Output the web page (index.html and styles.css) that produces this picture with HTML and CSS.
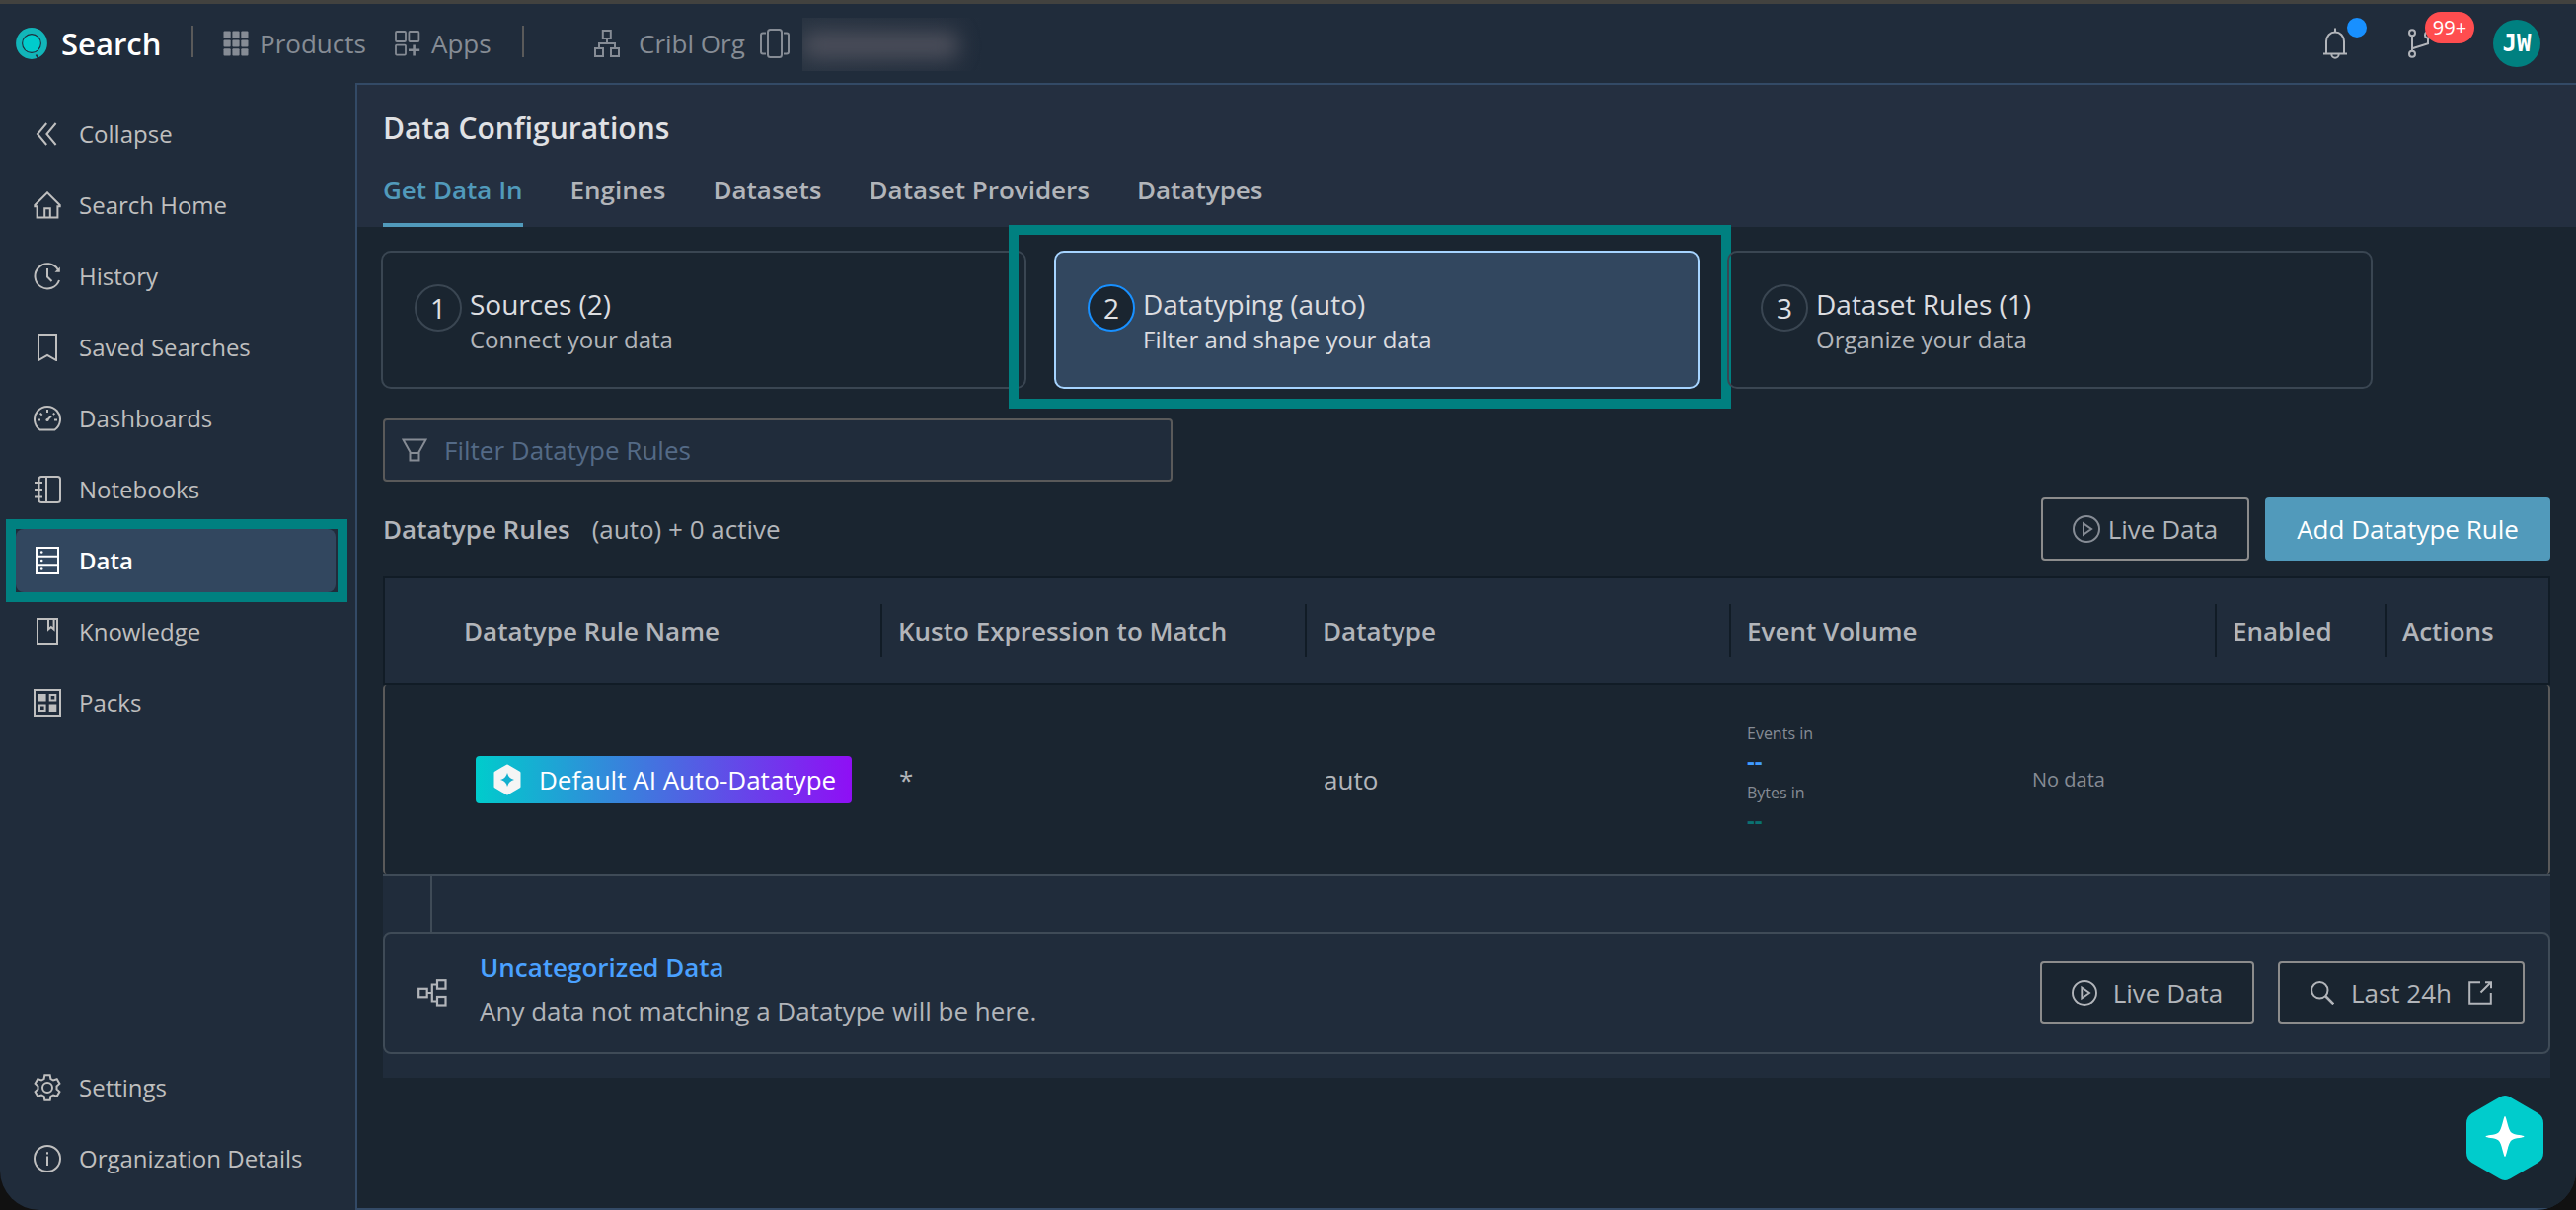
FILE: index.html
```html
<!DOCTYPE html>
<html lang="en">
<head>
    <meta charset="UTF-8">
    <meta name="viewport" content="width=device-width, initial-scale=1.0">
    <title>Data Configurations</title>
    <link rel="stylesheet" href="styles.css">
</head>
<body>
<div class="app">

    <header class="topbar">
        <div class="brand">
            <svg width="32" height="32" viewBox="0 0 32 32">
                <circle cx="16" cy="16" r="12.9" fill="none" stroke="#12b5b9" stroke-width="6"/>
                <circle cx="16" cy="16" r="8.8" fill="#00cccc"/>
                <path d="M20.5 27.5l2.6 4.5" stroke="#202c3b" stroke-width="1.6"/>
            </svg>
            <span>Search</span>
        </div>
        <div class="divider"></div>
        <div class="top-link products">
            <svg width="26" height="26" viewBox="0 0 26 26" fill="currentColor">
                <rect x="0.5" y="0.5" width="7.2" height="7.2" rx="1"/><rect x="9.4" y="0.5" width="7.2" height="7.2" rx="1"/><rect x="18.3" y="0.5" width="7.2" height="7.2" rx="1"/>
                <rect x="0.5" y="9.4" width="7.2" height="7.2" rx="1"/><rect x="9.4" y="9.4" width="7.2" height="7.2" rx="1"/><rect x="18.3" y="9.4" width="7.2" height="7.2" rx="1"/>
                <rect x="0.5" y="18.3" width="7.2" height="7.2" rx="1"/><rect x="9.4" y="18.3" width="7.2" height="7.2" rx="1"/><rect x="18.3" y="18.3" width="7.2" height="7.2" rx="1"/>
            </svg>
            <span>Products</span>
        </div>
        <div class="top-link apps">
            <svg width="26" height="26" viewBox="0 0 26 26" fill="none" stroke="currentColor" stroke-width="1.8">
                <rect x="1" y="1" width="10" height="10" rx="1"/><rect x="14.4" y="1" width="10" height="10" rx="1"/><rect x="1" y="14.6" width="10" height="10" rx="1"/>
                <path d="M19.6 14.4v11M14 19.8h11.2" stroke-width="2.6"/>
            </svg>
            <span>Apps</span>
        </div>
        <div class="divider"></div>
        <div class="top-link org">
            <svg width="26" height="28" viewBox="0 0 26 28" fill="none" stroke="currentColor" stroke-width="2">
                <rect x="8.8" y="1" width="8" height="8"/><rect x="1" y="19" width="8" height="8"/><rect x="17" y="19" width="8" height="8"/>
                <path d="M13 9v5M5 19v-5h16v5"/>
            </svg>
            <span>Cribl Org</span>
        </div>
        <svg class="top-cards" width="32" height="30" viewBox="0 0 32 30" fill="none" stroke="currentColor" stroke-width="2">
            <rect x="9" y="1" width="14" height="28" rx="2.5"/>
            <path d="M7 4.5H4Q2 4.5 2 6.5v17q0 2 2 2h3M25 4.5h3q2 0 2 2v17q0 2-2 2h-3"/>
        </svg>
        <div class="redacted"><div class="redacted-blob"></div></div>

        <div class="top-right">
            <div class="bell">
                <svg width="24" height="32" viewBox="0 0 24 32" fill="none" stroke="currentColor" stroke-width="2">
                    <path d="M3 26V14a9 9.5 0 0 1 18 0v12M0 26.5h24M12 0.5v4M8.3 27a3.7 3.7 0 0 0 7.4 0"/>
                </svg>
                <span class="dot"></span>
            </div>
            <div class="branch">
                <svg width="30" height="30" viewBox="0 0 30 30" fill="none" stroke="currentColor" stroke-width="2">
                    <circle cx="4" cy="4.2" r="3"/><circle cx="4" cy="25.8" r="3"/><circle cx="20" cy="6.5" r="3"/>
                    <path d="M4 7.2v15.6M4 20.2l16-5V9.5"/>
                </svg>
                <span class="count">99+</span>
            </div>
            <div class="avatar">JW</div>
        </div>
    </header>

    <div class="body">
        <nav class="sidebar">
            <a class="nav-item">
                <svg width="28" height="28" viewBox="0 0 28 28"><path d="M13.2 3L4 14l9.200 11M22.600 3l-9.200 11 9.200 11"/></svg>
                <span>Collapse</span>
            </a>
            <a class="nav-item">
                <svg width="28" height="28" viewBox="0 0 28 28"><path d="M4 15.200H1.300V14L14 1.300 26.700 14v1.200H24.400V26.500H3.600V15.200zM11.200 26V17.300h5.600V26"/></svg>
                <span>Search Home</span>
            </a>
            <a class="nav-item">
                <svg width="28" height="28" viewBox="0 0 28 28"><path d="M24.800 7.200A12.600 12.600 0 1 0 26 18M14 6v8.500l4.500 4.500"/><path class="solid" d="M26.800 4.500v5.300h-5.300z"/></svg>
                <span>History</span>
            </a>
            <a class="nav-item">
                <svg width="28" height="28" viewBox="0 0 28 28"><path d="M5 1h18v26l-9-5.200L5 27z"/></svg>
                <span>Saved Searches</span>
            </a>
            <a class="nav-item">
                <svg width="28" height="28" viewBox="0 0 28 28"><path d="M6.500 25.500A13 13 0 1 1 21.500 25.500zM14 5v3M4 15.500h3M21 15.500h3M6.700 8.600l2 2M21.300 8.600l-1.400 1.400M14 15.500l4-4"/><circle class="solid" cx="14" cy="15.500" r="1.600"/></svg>
                <span>Dashboards</span>
            </a>
            <a class="nav-item">
                <svg width="28" height="28" viewBox="0 0 28 28"><rect x="5.500" y="1" width="21.500" height="26" rx="2.500"/><path d="M13 1v26M1 7h8M1 14h8M1 21.500h8"/></svg>
                <span>Notebooks</span>
            </a>
            <a class="nav-item active">
                <svg width="28" height="28" viewBox="0 0 28 28"><path d="M3 1h22v26H3zM3 9.700h22M3 18.300h22"/><circle class="solid" cx="8.200" cy="5.500" r="1.300"/><circle class="solid" cx="8.200" cy="14" r="1.300"/><circle class="solid" cx="8.200" cy="22.500" r="1.300"/></svg>
                <span>Data</span>
            </a>
            <a class="nav-item">
                <svg width="28" height="28" viewBox="0 0 28 28"><path d="M4 1h20v26H4zM15 1v10.500l2.800-2.500 2.800 2.500V1"/></svg>
                <span>Knowledge</span>
            </a>
            <a class="nav-item">
                <svg width="28" height="28" viewBox="0 0 28 28"><path d="M1 1h26v26H1zM16.700 6h5.600v5.600h-5.600zM6 16.500h5.600v5.600H6z"/><path class="solid" d="M5 5h7.600v7.600H5zM15.700 15.500h7.600v7.600h-7.600z"/></svg>
                <span>Packs</span>
            </a>
            <a class="nav-item push">
                <svg width="28" height="28" viewBox="0 0 28 28"><circle cx="14" cy="14" r="5"/><path d="M11.300 1.200h5.400l.7 3.800 2.600 1.500 3.700-1.300 2.700 4.700-2.900 2.500v3.200l2.900 2.500-2.700 4.700-3.700-1.300-2.600 1.500-.7 3.800h-5.400l-.7-3.800L8 21.500l-3.700 1.300-2.700-4.700 2.900-2.500v-3.200L1.600 9.900l2.700-4.700L8 6.500 10.600 5z"/></svg>
                <span>Settings</span>
            </a>
            <a class="nav-item">
                <svg width="28" height="28" viewBox="0 0 28 28"><circle cx="14" cy="14" r="13"/><path d="M14 11.500V21M14 7.300v2.200"/></svg>
                <span>Organization Details</span>
            </a>
        </nav>

        <main class="main">
            <div class="page-head">
                <h1>Data Configurations</h1>
                <div class="tabs">
                    <a class="tab active">Get Data In</a>
                    <a class="tab">Engines</a>
                    <a class="tab">Datasets</a>
                    <a class="tab">Dataset Providers</a>
                    <a class="tab">Datatypes</a>
                </div>
            </div>

            <div class="content">
                <div class="steps">
                    <div class="step">
                        <div class="step-num">1</div>
                        <div>
                            <div class="step-title">Sources (2)</div>
                            <div class="step-sub">Connect your data</div>
                        </div>
                    </div>
                    <div class="step selected">
                        <div class="step-num">2</div>
                        <div>
                            <div class="step-title">Datatyping (auto)</div>
                            <div class="step-sub">Filter and shape your data</div>
                        </div>
                    </div>
                    <div class="step">
                        <div class="step-num">3</div>
                        <div>
                            <div class="step-title">Dataset Rules (1)</div>
                            <div class="step-sub">Organize your data</div>
                        </div>
                    </div>
                </div>

                <div class="filter">
                    <svg width="26" height="24" viewBox="0 0 26 24" fill="none" stroke="currentColor" stroke-width="2">
                        <path d="M1.500 1.500h23l-7 12.500v8.500h-9V14zM8.500 15h9"/>
                    </svg>
                    <input type="text" placeholder="Filter Datatype Rules">
                </div>

                <div class="rules-bar">
                    <strong>Datatype Rules</strong>
                    <span>(auto) + 0 active</span>
                    <button class="btn btn-live">
                        <svg width="28" height="28" viewBox="0 0 28 28" fill="none" stroke="currentColor" stroke-width="2"><circle cx="14" cy="14" r="13"/><path d="M11 8.500v11l8-5.500z"/></svg>
                        Live Data
                    </button>
                    <button class="btn btn-primary">Add Datatype Rule</button>
                </div>

                <div class="grid-row grid-head">
                    <div></div>
                    <div>Datatype Rule Name</div>
                    <div>Kusto Expression to Match</div>
                    <div>Datatype</div>
                    <div>Event Volume</div>
                    <div>Enabled</div>
                    <div>Actions</div>
                </div>
                <div class="grid-row grid-body">
                    <div></div>
                    <div>
                        <span class="ai-badge">
                            <svg width="28" height="32" viewBox="0 0 28 32">
                                <path d="M14 2L26 9v14L14 30 2 23V9z" fill="#f5f5f5" stroke="#f5f5f5" stroke-width="3" stroke-linejoin="round"/>
                                <path d="M14 9q1.300 5.700 7 7-5.700 1.300-7 7-1.300-5.700-7-7 5.700-1.300 7-7z" fill="#12b0cf"/>
                            </svg>
                            Default AI Auto-Datatype
                        </span>
                    </div>
                    <div>*</div>
                    <div>auto</div>
                    <div class="volume">
                        <div class="volume-stats">
                            <span>Events in</span>
                            <b class="events">--</b>
                            <span>Bytes in</span>
                            <b class="bytes">--</b>
                        </div>
                        <div class="no-data">No data</div>
                    </div>
                    <div></div>
                    <div></div>
                </div>

                <div class="fallback">
                    <div class="connector"></div>
                    <div class="fallback-card">
                        <svg width="30" height="28" viewBox="0 0 30 28" fill="none" stroke="currentColor" stroke-width="2.200">
                            <rect x="1.200" y="9.800" width="8.500" height="8.500"/><rect x="20" y="1.200" width="8.500" height="8.500"/><rect x="20" y="18" width="8.500" height="8.500"/>
                            <path d="M10 14h4.800M20 5.500h-5.200v17H20"/>
                        </svg>
                        <div class="fallback-text">
                            <a>Uncategorized Data</a>
                            <p>Any data not matching a Datatype will be here.</p>
                        </div>
                        <button class="btn btn-wide">
                            <svg width="26" height="26" viewBox="0 0 26 26" fill="none" stroke="currentColor" stroke-width="1.900"><circle cx="13" cy="13" r="12"/><path d="M10.300 7.500v11l7.700-5.500z"/></svg>
                            Live Data
                        </button>
                        <button class="btn btn-last">
                            <svg width="24" height="24" viewBox="0 0 24 24" fill="none" stroke="currentColor" stroke-width="2"><circle cx="9.300" cy="9.300" r="8.200"/><path d="M15 15l8.300 8.300" stroke-width="2.600"/></svg>
                            Last 24h
                            <svg width="24" height="24" viewBox="0 0 24 24" fill="none" stroke="currentColor" stroke-width="2"><path d="M12 1.200H1.200v21.600h21.600V12M12.500 11.500L22 2M17 1.200h6v6"/></svg>
                        </button>
                    </div>
                </div>
            </div>
        </main>
    </div>

    <!-- assistant launcher -->
    <div class="assistant">
        <svg width="78" height="86" viewBox="0 0 78 86">
            <path d="M33.500 1.700q5.500-3.200 11 0L72.500 18Q78 21.500 78 28v30q0 6.500-5.500 10l-28 16.300q-5.500 3.200-11 0L5.500 68Q0 64.500 0 58V28q0-6.500 5.500-10z" fill="#00cccc"/>
            <path d="M39 21c1.500 0 3 13.500 6.500 16.500S58.500 40 58.500 41.500 49 42.500 45.500 45.500 40.500 62 39 62s-3-13.500-6.500-16.500S19.500 43 19.500 41.500 29 40.500 32.500 37.500 37.500 21 39 21z" fill="#fff"/>
        </svg>
    </div>
</div>
</body>
</html>
```

FILE: styles.css
```css
* {
    box-sizing: border-box;
}
html {
    background: #111;
}
body {
    margin: 0;
    font-family: "Open Sans", sans-serif;
    font-size: 26px;
    color: #b2b5ba;
}
svg {
    display: block;
    flex: none;
}
.app {
    position: relative;
    display: flex;
    flex-direction: column;
    height: 1226px;
    overflow: hidden;
    background: #202c3b;
    border-top: 4px solid #42423f;
    border-radius: 0 0 40px 40px;
}

/* top bar */
.topbar {
    display: flex;
    align-items: center;
    height: 80px;
    padding: 0 36px 0 16px;
    color: #868c95;
}
.brand {
    display: flex;
    align-items: center;
    gap: 14px;
    width: 178px;
    color: #fff;
    font-size: 31px;
    font-weight: 600;
}
.divider {
    width: 2px;
    height: 32px;
    background: #5a5a5a;
    margin-bottom: 4px;
}
.top-link {
    display: flex;
    align-items: center;
    gap: 11px;
}
.products {
    width: 174px;
    margin-left: 30px;
}
.apps {
    width: 129px;
}
.org {
    margin-left: 71px;
    gap: 19px;
    width: 167px;
    white-space: nowrap;
}
.redacted {
    width: 182px;
    height: 54px;
    margin: 2px 0 0 12px;
    overflow: hidden;
    background: linear-gradient(90deg, #283341, #232e3d 85%, #202c3b);
}
.redacted-blob {
    width: 158px;
    height: 28px;
    margin: 14px 0 0;
    border-radius: 10px;
    background: #4b4e5a;
    filter: blur(10px);
}
.top-right {
    display: flex;
    align-items: center;
    margin-left: auto;
    color: #b2b5ba;
}
.bell, .branch {
    position: relative;
}
.bell {
    margin-right: 62px;
}
.branch {
    margin-right: 56px;
}
.dot {
    position: absolute;
    left: 24px;
    top: -10px;
    width: 20px;
    height: 20px;
    border-radius: 50%;
    background: #1890ff;
}
.count {
    position: absolute;
    left: 17px;
    top: -17px;
    width: 50px;
    height: 32px;
    border-radius: 16px;
    background: #ff4d4f;
    color: #fff;
    font-size: 20px;
    line-height: 32px;
    text-align: center;
}
.avatar {
    width: 48px;
    height: 48px;
    border-radius: 50%;
    background: #008080;
    color: #fff;
    font: bold 24px/48px "DejaVu Sans Mono", monospace;
    text-align: center;
}

/* sidebar */
.body {
    display: flex;
    flex: 1;
    min-height: 0;
}
.sidebar {
    display: flex;
    flex-direction: column;
    gap: 8px;
    width: 360px;
    padding: 20px 20px 20px 16px;
}
.nav-item {
    position: relative;
    display: flex;
    align-items: center;
    gap: 18px;
    height: 64px;
    padding-left: 18px;
    border-radius: 8px;
    color: #bfbfbf;
    font-size: 24px;
}
.nav-item span {
    padding-bottom: 2px;
}
.nav-item svg {
    fill: none;
    stroke: currentColor;
    stroke-width: 2;
}
.nav-item .solid {
    fill: currentColor;
    stroke: none;
}
.nav-item.active {
    background: #32475f;
    color: #fff;
    font-weight: 600;
}
.nav-item.active::after {
    content: "";
    position: absolute;
    inset: -10px -12px -10px -10px;
    border: 10px solid #008080;
}
.push {
    margin-top: auto;
}

/* page */
.main {
    flex: 1;
    min-width: 0;
    border: 2px solid #334a66;
    border-right: none;
    background: #1a2530;
}
.page-head {
    height: 144px;
    padding: 23px 26px 0;
    background: #242f40;
}
h1 {
    margin: 0;
    color: #e0e1e4;
    font-size: 30px;
    font-weight: 600;
    line-height: 42px;
}
.tabs {
    display: flex;
    gap: 48px;
    margin-top: 21px;
}
.tab {
    height: 58px;
    font-weight: 600;
    line-height: 40px;
}
.tab.active {
    color: #519abb;
    border-bottom: 4px solid #519abb;
}
.content {
    padding: 24px 26px 0;
}

.steps {
    display: flex;
    gap: 28px;
    margin-left: -2px;
}
.step {
    position: relative;
    display: flex;
    gap: 8px;
    width: 654px;
    height: 140px;
    padding: 32px;
    border: 2px solid #3a4652;
    border-radius: 10px;
}
.step-num {
    width: 48px;
    height: 48px;
    border: 2px solid #3a4652;
    border-radius: 50%;
    background: #1a2530;
    color: #e0e1e4;
    font-size: 28px;
    line-height: 45px;
    text-align: center;
}
.step-title {
    color: #dcdde0;
    font-size: 28px;
    line-height: 40px;
}
.step-sub {
    font-size: 24px;
    line-height: 32px;
}
.step.selected {
    background: #32475f;
    border-color: #a6d4ff;
}
.selected .step-num {
    border-color: #1890ff;
}
.selected .step-sub {
    color: #dcdde0;
}
.selected::after {
    content: "";
    position: absolute;
    inset: -28px -34px -22px -48px;
    border: 10px solid #008080;
}

.filter {
    display: flex;
    align-items: center;
    gap: 17px;
    width: 800px;
    height: 64px;
    margin-top: 30px;
    padding-left: 17px;
    border: 2px solid #5a5a5a;
    border-radius: 4px;
    background: #202c3b;
    color: #868c95;
}
.filter input {
    flex: 1;
    padding: 0;
    border: none;
    background: none;
    color: #fff;
    font: inherit;
}
.filter input::placeholder {
    color: #546a86;
}

.rules-bar {
    display: flex;
    align-items: center;
    gap: 16px;
    margin: 16px 0;
}
.rules-bar strong {
    font-weight: 600;
    margin-right: 6px;
}
.btn {
    display: flex;
    align-items: center;
    justify-content: center;
    height: 64px;
    padding: 0;
    border: 2px solid #8c8c8c;
    border-radius: 4px;
    background: #1a2530;
    color: #b2b5ba;
    font: inherit;
}
.btn-live {
    width: 211px;
    gap: 8px;
    margin-left: auto;
}
.btn-live svg {
    color: #868c95;
}
.btn-primary {
    width: 289px;
    border: none;
    background: #519abb;
    color: #fff;
}

.grid-row {
    display: grid;
    grid-template-columns: 64px 440px 430px 430px 492px 172px 1fr;
    align-items: center;
}
.grid-row > div {
    padding-left: 16px;
}
.grid-head {
    height: 110px;
    border: 2px solid #111c26;
    background: #202c3b;
    font-weight: 600;
}
.grid-head > div {
    height: 54px;
    line-height: 54px;
    border-right: 2px solid #111c26;
}
.grid-head > div:first-child, .grid-head > div:last-child {
    border-right: none;
}
.grid-body {
    height: 192px;
    border: 2px solid #5a5a5a;
    border-width: 0 2px;
    border-radius: 4px;
}
.grid-body > div:nth-child(3), .grid-body > div:nth-child(4) {
    padding-left: 17px;
}
.ai-badge {
    display: flex;
    align-items: center;
    gap: 18px;
    width: 381px;
    height: 48px;
    margin-left: 12px;
    padding-left: 18px;
    border-radius: 4px;
    background: linear-gradient(90deg, #00cccc, #8f0ff5);
    color: #fff;
}
.volume {
    display: flex;
    align-items: center;
}
.volume-stats {
    display: flex;
    flex-direction: column;
    width: 289px;
    margin-bottom: 4px;
    font-size: 16px;
    line-height: 30px;
    color: #868c95;
}
.volume-stats b {
    height: 30px;
    font-size: 24px;
    line-height: 26px;
}
.events {
    color: #409cff;
}
.bytes {
    color: #0a7272;
}
.no-data {
    padding-bottom: 2px;
    font-size: 20px;
    color: #868c95;
}

.fallback {
    height: 206px;
    border-top: 2px solid #3f4b57;
    background: #202c3b;
}
.connector {
    width: 50px;
    height: 56px;
    border-right: 2px solid #3f4b57;
}
.fallback-card {
    display: flex;
    align-items: center;
    height: 124px;
    padding: 0 24px 0 33px;
    border: 2px solid #3f4b57;
    border-radius: 8px;
}
.fallback-text {
    flex: 1;
    margin-left: 33px;
    padding-bottom: 8px;
    line-height: 44px;
}
.fallback-text a {
    color: #4aa1ff;
    font-weight: 600;
}
.fallback-text p {
    margin: 0;
}
.btn-wide {
    gap: 16px;
    width: 217px;
}
.btn-last {
    gap: 17px;
    width: 250px;
    margin-left: 24px;
}

.assistant {
    position: absolute;
    right: 33px;
    bottom: 30px;
}
```
